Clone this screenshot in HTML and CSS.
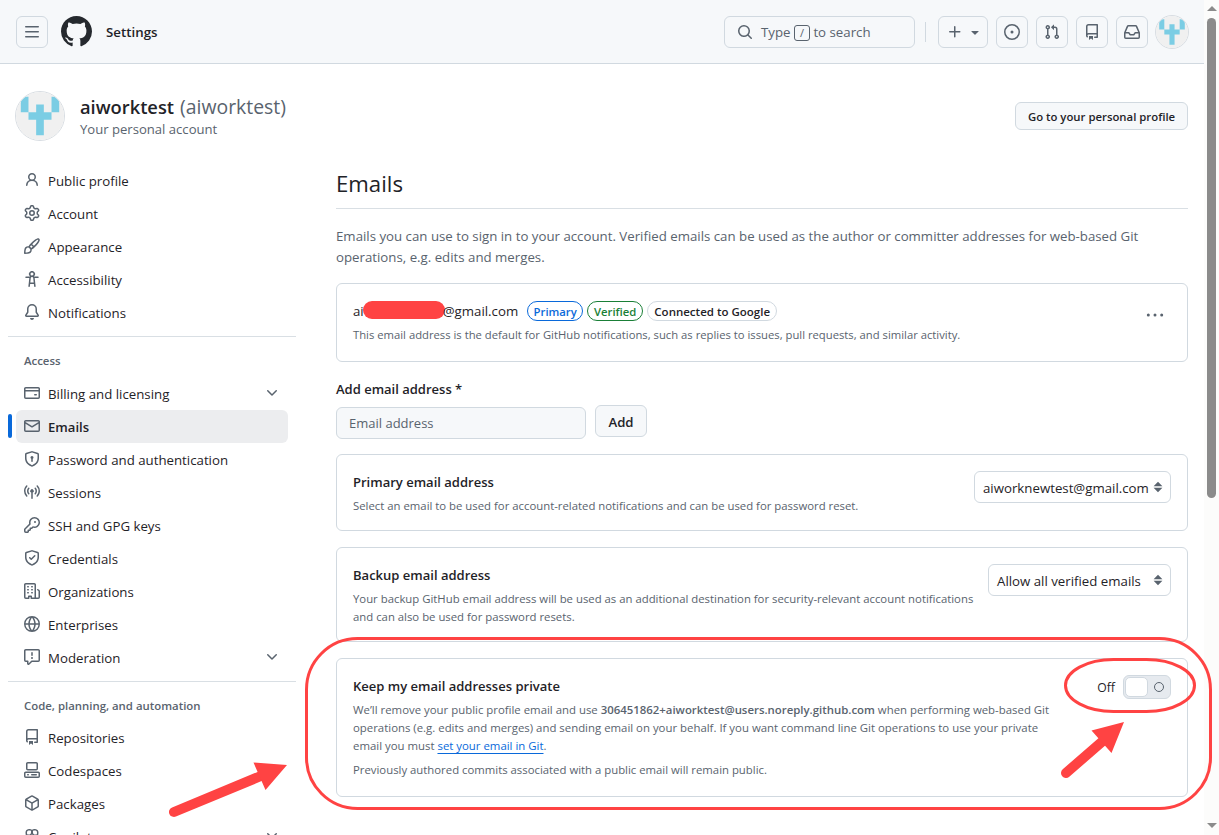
FILE: index.html
```
<!DOCTYPE html>
<html lang="en">
<head>
  <meta charset="UTF-8" />
  <meta name="viewport" content="width=device-width, initial-scale=1.0"/>
  <title>Emails - Settings</title>
  <link rel="stylesheet" href="styles.css">
</head>
<body>

  <!-- icons -->
  <svg class="sprite">
    <symbol id="i-bars" viewBox="0 0 16 16"><path d="M1 2.75A.75.75 0 0 1 1.75 2h12.5a.75.75 0 0 1 0 1.5H1.75A.75.75 0 0 1 1 2.75Zm0 5A.75.75 0 0 1 1.75 7h12.5a.75.75 0 0 1 0 1.5H1.75A.75.75 0 0 1 1 7.75ZM1.75 12h12.5a.75.75 0 0 1 0 1.5H1.75a.75.75 0 0 1 0-1.5Z"/></symbol>
    <symbol id="i-github" viewBox="0 0 16 16"><path d="M8 0c4.42 0 8 3.58 8 8a8.013 8.013 0 0 1-5.45 7.59c-.4.08-.55-.17-.55-.38 0-.27.01-1.13.01-2.2 0-.75-.25-1.23-.54-1.48 1.78-.2 3.65-.88 3.65-3.95 0-.88-.31-1.59-.82-2.15.08-.2.36-1.02-.08-2.12 0 0-.67-.22-2.2.82-.64-.18-1.32-.27-2-.27-.68 0-1.36.09-2 .27-1.53-1.03-2.2-.82-2.2-.82-.44 1.1-.16 1.92-.08 2.12-.51.56-.82 1.28-.82 2.15 0 3.06 1.86 3.75 3.64 3.95-.23.2-.44.55-.51 1.07-.46.21-1.61.55-2.33-.66-.15-.24-.6-.83-1.23-.82-.67.01-.27.38.01.53.34.19.73.9.82 1.13.16.45.68 1.31 2.69.94 0 .67.01 1.3.01 1.49 0 .21-.15.45-.55.38A7.995 7.995 0 0 1 0 8c0-4.42 3.58-8 8-8Z"/></symbol>
    <symbol id="i-search" viewBox="0 0 16 16"><path d="M10.68 11.74a6 6 0 0 1-7.922-8.982 6 6 0 0 1 8.982 7.922l3.04 3.04a.749.749 0 0 1-.326 1.275.749.749 0 0 1-.734-.215ZM11.5 7a4.499 4.499 0 1 0-8.997 0A4.499 4.499 0 0 0 11.5 7Z"/></symbol>
    <symbol id="i-plus" viewBox="0 0 16 16"><path d="M7.75 2a.75.75 0 0 1 .75.75V7h4.25a.75.75 0 0 1 0 1.5H8.5v4.25a.75.75 0 0 1-1.5 0V8.5H2.75a.75.75 0 0 1 0-1.5H7V2.75A.75.75 0 0 1 7.75 2Z"/></symbol>
    <symbol id="i-triangle" viewBox="0 0 16 16"><path d="m4.427 7.427 3.396 3.396a.25.25 0 0 0 .354 0l3.396-3.396A.25.25 0 0 0 11.396 7H4.604a.25.25 0 0 0-.177.427Z"/></symbol>
    <symbol id="i-issue" viewBox="0 0 16 16"><path d="M8 9.5a1.5 1.5 0 1 0 0-3 1.5 1.5 0 0 0 0 3Z"/><path d="M8 0a8 8 0 1 1 0 16A8 8 0 0 1 8 0ZM1.5 8a6.5 6.5 0 1 0 13 0 6.5 6.5 0 0 0-13 0Z"/></symbol>
    <symbol id="i-pull" viewBox="0 0 16 16"><path d="M1.5 3.25a2.25 2.25 0 1 1 3 2.122v5.256a2.251 2.251 0 1 1-1.5 0V5.372A2.25 2.25 0 0 1 1.5 3.25Zm5.677-.177L9.573.677A.25.25 0 0 1 10 .854V2.5h1A2.5 2.5 0 0 1 13.5 5v5.628a2.251 2.251 0 1 1-1.5 0V5a1 1 0 0 0-1-1h-1v1.646a.25.25 0 0 1-.427.177L7.177 3.427a.25.25 0 0 1 0-.354ZM3.75 2.5a.75.75 0 1 0 0 1.5.75.75 0 0 0 0-1.5Zm0 9.5a.75.75 0 1 0 0 1.5.75.75 0 0 0 0-1.5Zm8.25.75a.75.75 0 1 0 1.5 0 .75.75 0 0 0-1.5 0Z"/></symbol>
    <symbol id="i-repo" viewBox="0 0 16 16"><path d="M2 2.5A2.5 2.5 0 0 1 4.5 0h8.75a.75.75 0 0 1 .75.75v12.5a.75.75 0 0 1-.75.75h-2.5a.75.75 0 0 1 0-1.5h1.75v-2h-8a1 1 0 0 0-.714 1.7.75.75 0 1 1-1.072 1.05A2.495 2.495 0 0 1 2 11.5Zm10.5-1h-8a1 1 0 0 0-1 1v6.708A2.486 2.486 0 0 1 4.5 9h8ZM5 12.25a.25.25 0 0 1 .25-.25h3.5a.25.25 0 0 1 .25.25v3.25a.25.25 0 0 1-.4.2l-1.45-1.087a.249.249 0 0 0-.3 0L5.4 15.7a.25.25 0 0 1-.4-.2Z"/></symbol>
    <symbol id="i-inbox" viewBox="0 0 16 16"><path d="M2.8 2.06A1.75 1.75 0 0 1 4.41 1h7.18c.7 0 1.333.417 1.61 1.06l2.74 6.395c.04.093.06.194.06.295v4.5A1.75 1.75 0 0 1 14.25 15H1.75A1.75 1.75 0 0 1 0 13.25v-4.5c0-.101.02-.202.06-.295Zm1.61.44a.25.25 0 0 0-.23.152L1.887 8H4.75a.75.75 0 0 1 .6.3L6.625 10h2.75l1.275-1.7a.75.75 0 0 1 .6-.3h2.863L11.82 2.652a.25.25 0 0 0-.23-.152Zm10.09 7h-2.875l-1.275 1.7a.75.75 0 0 1-.6.3h-3.5a.75.75 0 0 1-.6-.3L4.375 9.5H1.5v3.75c0 .138.112.25.25.25h12.5a.25.25 0 0 0 .25-.25Z"/></symbol>
    <symbol id="i-person" viewBox="0 0 16 16"><path d="M10.561 8.073a6.005 6.005 0 0 1 3.432 5.142.75.75 0 1 1-1.498.07 4.5 4.5 0 0 0-8.99 0 .75.75 0 0 1-1.498-.07 6.004 6.004 0 0 1 3.431-5.142 3.999 3.999 0 1 1 5.123 0ZM10.5 5a2.5 2.5 0 1 0-5 0 2.5 2.5 0 0 0 5 0Z"/></symbol>
    <symbol id="i-gear" viewBox="0 0 16 16"><path d="M8 0a8.2 8.2 0 0 1 .701.031C9.444.095 9.99.645 10.16 1.29l.288 1.107c.018.066.079.158.212.224.231.114.454.243.668.386.123.082.233.09.299.071l1.103-.303c.644-.176 1.392.021 1.82.63.27.385.506.792.704 1.218.315.675.111 1.422-.364 1.891l-.814.806c-.049.048-.098.147-.088.294.016.257.016.515 0 .772-.01.147.038.246.088.294l.814.806c.475.469.679 1.216.364 1.891a7.977 7.977 0 0 1-.704 1.217c-.428.61-1.176.807-1.82.63l-1.102-.302c-.067-.019-.177-.011-.3.071a5.909 5.909 0 0 1-.668.386c-.133.066-.194.158-.211.224l-.29 1.106c-.168.646-.715 1.196-1.458 1.26a8.006 8.006 0 0 1-1.402 0c-.743-.064-1.289-.614-1.458-1.26l-.289-1.106c-.018-.066-.079-.158-.212-.224a5.738 5.738 0 0 1-.668-.386c-.123-.082-.233-.09-.299-.071l-1.103.303c-.644.176-1.392-.021-1.82-.63a8.12 8.12 0 0 1-.704-1.218c-.315-.675-.111-1.422.363-1.891l.815-.806c.05-.048.098-.147.088-.294a6.214 6.214 0 0 1 0-.772c.01-.147-.038-.246-.088-.294l-.815-.806C.635 6.045.431 5.298.746 4.623a7.92 7.92 0 0 1 .704-1.217c.428-.61 1.176-.807 1.82-.63l1.102.302c.067.019.177.011.3-.071.214-.143.437-.272.668-.386.133-.066.194-.158.211-.224l.29-1.106C6.009.645 6.556.095 7.299.03 7.53.01 7.764 0 8 0Zm-.571 1.525c-.036.003-.108.036-.137.146l-.289 1.105c-.147.561-.549.967-.998 1.189-.173.086-.34.183-.5.29-.417.278-.97.423-1.529.27l-1.103-.303c-.109-.03-.175.016-.195.045-.22.312-.412.644-.573.99-.014.031-.021.11.059.19l.815.806c.411.406.562.957.53 1.456a4.709 4.709 0 0 0 0 .582c.032.499-.119 1.05-.53 1.456l-.815.806c-.081.08-.073.159-.059.19.162.346.353.677.573.989.02.03.085.076.195.046l1.102-.303c.56-.153 1.113-.008 1.53.27.161.107.328.204.501.29.447.222.85.629.997 1.189l.289 1.105c.029.109.101.143.137.146a6.6 6.6 0 0 0 1.142 0c.036-.003.108-.036.137-.146l.289-1.105c.147-.561.549-.967.998-1.189.173-.086.34-.183.5-.29.417-.278.97-.423 1.529-.27l1.103.303c.109.029.175-.016.195-.045.22-.313.411-.644.573-.99.014-.031.021-.11-.059-.19l-.815-.806c-.411-.406-.562-.957-.53-1.456a4.709 4.709 0 0 0 0-.582c-.032-.499.119-1.05.53-1.456l.815-.806c.081-.08.073-.159.059-.19a6.464 6.464 0 0 0-.573-.989c-.02-.03-.085-.076-.195-.046l-1.102.303c-.56.153-1.113.008-1.53-.27a4.44 4.44 0 0 0-.501-.29c-.447-.222-.85-.629-.997-1.189l-.289-1.105c-.029-.11-.101-.143-.137-.146a6.6 6.6 0 0 0-1.142 0ZM11 8a3 3 0 1 1-6 0 3 3 0 0 1 6 0ZM9.5 8a1.5 1.5 0 1 0-3.001.001A1.5 1.5 0 0 0 9.5 8Z"/></symbol>
    <symbol id="i-brush" viewBox="0 0 16 16"><path d="M11.134 1.535c.7-.509 1.416-.942 2.076-1.155.649-.21 1.463-.267 2.069.34.603.601.568 1.411.368 2.07-.202.668-.624 1.39-1.125 2.096-1.011 1.424-2.496 2.987-3.775 4.249-1.098 1.084-2.132 1.839-3.04 2.3a3.744 3.744 0 0 1-1.055 3.217c-.431.431-1.065.691-1.657.861-.614.177-1.294.287-1.914.357A21.151 21.151 0 0 1 .797 16H.743l.007-.75H.749L.742 16a.75.75 0 0 1-.743-.742l.743-.008-.742.007v-.054a21.25 21.25 0 0 1 .13-2.284c.067-.647.187-1.287.358-1.914.17-.591.43-1.226.86-1.657a3.746 3.746 0 0 1 3.227-1.054c.466-.893 1.225-1.907 2.314-2.982 1.271-1.255 2.833-2.75 4.245-3.777ZM1.62 13.089c-.051.464-.086.929-.104 1.395.466-.018.932-.053 1.396-.104a10.511 10.511 0 0 0 1.668-.309c.526-.151.856-.325 1.011-.48a2.25 2.25 0 1 0-3.182-3.182c-.155.155-.329.485-.48 1.01a10.515 10.515 0 0 0-.309 1.67Zm10.396-10.34c-1.224.89-2.605 2.189-3.822 3.384l1.718 1.718c1.21-1.205 2.51-2.597 3.387-3.833.47-.662.78-1.227.912-1.662.134-.444.032-.551.009-.575h-.001V1.78c-.014-.014-.113-.113-.548.027-.432.14-.995.462-1.655.942Zm-4.832 7.266-.001.001a9.859 9.859 0 0 0 1.63-1.142L7.155 7.216a9.7 9.7 0 0 0-1.161 1.607c.482.302.889.71 1.19 1.192Z"/></symbol>
    <symbol id="i-a11y" viewBox="0 0 16 16"><path d="M9.923 5.302c.063.063.122.129.178.198H14A.75.75 0 0 1 14 7h-3.3l.578 5.163.362 2.997a.75.75 0 0 1-1.49.18L9.868 13H6.132l-.282 2.34a.75.75 0 0 1-1.49-.18l.362-2.997L5.3 7H2a.75.75 0 0 1 0-1.5h3.9a2.54 2.54 0 0 1 .176-.198 3 3 0 1 1 3.847 0ZM9.2 7.073h-.001a1.206 1.206 0 0 0-2.398 0L6.305 11.5h3.39ZM9.5 3a1.5 1.5 0 1 0-3.001.001A1.5 1.5 0 0 0 9.5 3Z"/></symbol>
    <symbol id="i-bell" viewBox="0 0 16 16"><path d="M8 16a2 2 0 0 0 1.985-1.75c.017-.137-.097-.25-.235-.25h-3.5c-.138 0-.252.113-.235.25A2 2 0 0 0 8 16ZM3 5a5 5 0 0 1 10 0v2.947c0 .05.015.098.042.139l1.703 2.555A1.519 1.519 0 0 1 13.482 13H2.518a1.516 1.516 0 0 1-1.263-2.36l1.703-2.554A.255.255 0 0 0 3 7.947Zm5-3.5A3.5 3.5 0 0 0 4.5 5v2.947c0 .346-.102.683-.294.97l-1.703 2.556a.017.017 0 0 0-.003.01l.001.006c0 .002.002.004.004.006l.006.004.007.001h10.964l.007-.001.006-.004.004-.006.001-.007a.017.017 0 0 0-.003-.01l-1.703-2.554a1.745 1.745 0 0 1-.294-.97V5A3.5 3.5 0 0 0 8 1.5Z"/></symbol>
    <symbol id="i-card" viewBox="0 0 16 16"><path d="M10.75 9a.75.75 0 0 0 0 1.5h1.5a.75.75 0 0 0 0-1.5h-1.5Z"/><path d="M0 3.75C0 2.784.784 2 1.75 2h12.5c.966 0 1.75.784 1.75 1.75v8.5A1.75 1.75 0 0 1 14.25 14H1.75A1.75 1.75 0 0 1 0 12.25ZM14.5 6.5h-13v5.75c0 .138.112.25.25.25h12.5a.25.25 0 0 0 .25-.25Zm0-2.75a.25.25 0 0 0-.25-.25H1.75a.25.25 0 0 0-.25.25V5h13Z"/></symbol>
    <symbol id="i-mail" viewBox="0 0 16 16"><path d="M1.75 2h12.5c.966 0 1.75.784 1.75 1.75v8.5A1.75 1.75 0 0 1 14.25 14H1.75A1.75 1.75 0 0 1 0 12.25v-8.5C0 2.784.784 2 1.75 2ZM1.5 12.251c0 .138.112.25.25.25h12.5a.25.25 0 0 0 .25-.25V5.809L8.38 9.397a.75.75 0 0 1-.76 0L1.5 5.809v6.442Zm13-8.181v-.32a.25.25 0 0 0-.25-.25H1.75a.25.25 0 0 0-.25.25v.32L8 7.88Z"/></symbol>
    <symbol id="i-shield-lock" viewBox="0 0 16 16"><path d="m8.533.133 5.25 1.68A1.75 1.75 0 0 1 15 3.48V7c0 1.566-.32 3.182-1.303 4.682-.983 1.498-2.585 2.813-5.032 3.855a1.697 1.697 0 0 1-1.33 0c-2.447-1.042-4.049-2.357-5.032-3.855C1.32 10.182 1 8.566 1 7V3.48a1.75 1.75 0 0 1 1.217-1.667l5.25-1.68a1.748 1.748 0 0 1 1.066 0Zm-.61 1.429.001.001-5.25 1.68a.251.251 0 0 0-.174.237V7c0 1.36.275 2.666 1.057 3.859.784 1.194 2.121 2.342 4.366 3.298a.196.196 0 0 0 .154 0c2.245-.957 3.582-2.103 4.366-3.297C13.225 9.666 13.5 8.358 13.5 7V3.48a.25.25 0 0 0-.174-.238l-5.25-1.68a.25.25 0 0 0-.153 0ZM9.5 6.5c0 .536-.286 1.032-.75 1.3v2.45a.75.75 0 0 1-1.5 0V7.8A1.5 1.5 0 1 1 9.5 6.5Z"/></symbol>
    <symbol id="i-broadcast" viewBox="0 0 16 16"><path d="M8.75 8.582v5.668a.75.75 0 0 1-1.5 0V8.582a1.75 1.75 0 1 1 1.5 0Zm3.983-7.125a.75.75 0 0 1 1.06.026A7.976 7.976 0 0 1 16 7c0 2.139-.84 4.083-2.207 5.517a.75.75 0 1 1-1.086-1.034A6.474 6.474 0 0 0 14.5 7a6.474 6.474 0 0 0-1.793-4.483.75.75 0 0 1 .026-1.06Zm-9.466 0c.3.286.312.76.026 1.06A6.474 6.474 0 0 0 1.5 7a6.47 6.47 0 0 0 1.793 4.483.75.75 0 0 1-1.086 1.034A7.973 7.973 0 0 1 0 7c0-2.139.84-4.083 2.207-5.517a.75.75 0 0 1 1.06-.026Zm8.556 2.321A4.988 4.988 0 0 1 13 7a4.988 4.988 0 0 1-1.177 3.222.75.75 0 1 1-1.146-.967A3.487 3.487 0 0 0 11.5 7c0-.86-.309-1.645-.823-2.255a.75.75 0 0 1 1.146-.967Zm-6.492.958A3.48 3.48 0 0 0 4.5 7a3.48 3.48 0 0 0 .823 2.255.75.75 0 0 1-1.146.967A4.981 4.981 0 0 1 3 7a4.982 4.982 0 0 1 1.188-3.236.75.75 0 1 1 1.143.972Z"/></symbol>
    <symbol id="i-key" viewBox="0 0 16 16"><path d="M10.5 0a5.499 5.499 0 1 1-1.288 10.848l-.932.932a.749.749 0 0 1-.53.22H7v.75a.749.749 0 0 1-.22.53l-.5.5a.749.749 0 0 1-.53.22H5v.75a.749.749 0 0 1-.22.53l-.5.5a.749.749 0 0 1-.53.22h-2A1.75 1.75 0 0 1 0 14.25v-2c0-.199.079-.389.22-.53l4.932-4.932A5.5 5.5 0 0 1 10.5 0Zm-4 5.5c-.001.431.069.86.205 1.269a.75.75 0 0 1-.181.768L1.5 12.56v1.69c0 .138.112.25.25.25h1.69l.06-.06v-1.19a.75.75 0 0 1 .75-.75h1.19l.06-.06v-1.19a.75.75 0 0 1 .75-.75h1.19l1.023-1.025a.75.75 0 0 1 .768-.18A4 4 0 1 0 6.5 5.5ZM11 6a1 1 0 1 1 0-2 1 1 0 0 1 0 2Z"/></symbol>
    <symbol id="i-shield-check" viewBox="0 0 16 16"><path d="m8.533.133 5.25 1.68A1.75 1.75 0 0 1 15 3.48V7c0 1.566-.32 3.182-1.303 4.682-.983 1.498-2.585 2.813-5.032 3.855a1.697 1.697 0 0 1-1.33 0c-2.447-1.042-4.049-2.357-5.032-3.855C1.32 10.182 1 8.566 1 7V3.48a1.75 1.75 0 0 1 1.217-1.667l5.25-1.68a1.748 1.748 0 0 1 1.066 0Zm-.61 1.429.001.001-5.25 1.68a.251.251 0 0 0-.174.237V7c0 1.36.275 2.666 1.057 3.859.784 1.194 2.121 2.342 4.366 3.298a.196.196 0 0 0 .154 0c2.245-.957 3.582-2.103 4.366-3.297C13.225 9.666 13.5 8.358 13.5 7V3.48a.25.25 0 0 0-.174-.238l-5.25-1.68a.25.25 0 0 0-.153 0ZM11.28 6.28l-3.5 3.5a.75.75 0 0 1-1.06 0l-1.5-1.5a.749.749 0 0 1 .326-1.275.749.749 0 0 1 .734.215l.97.97 2.97-2.97a.751.751 0 0 1 1.042.018.751.751 0 0 1 .018 1.042Z"/></symbol>
    <symbol id="i-org" viewBox="0 0 16 16"><path d="M1.75 16A1.75 1.75 0 0 1 0 14.25V1.75C0 .784.784 0 1.75 0h8.5C11.216 0 12 .784 12 1.75v12.5c0 .085-.006.168-.018.25h2.268a.25.25 0 0 0 .25-.25V8.285a.25.25 0 0 0-.111-.208l-1.055-.703a.749.749 0 1 1 .832-1.248l1.055.703c.487.325.779.871.779 1.456v5.965A1.75 1.75 0 0 1 14.25 16h-3.5a.766.766 0 0 1-.197-.026c-.099.017-.2.026-.303.026h-3a.75.75 0 0 1-.75-.75V14h-1v1.25a.75.75 0 0 1-.75.75Zm-.25-1.75c0 .138.112.25.25.25H4v-1.25a.75.75 0 0 1 .75-.75h2.5a.75.75 0 0 1 .75.75v1.25h2.25a.25.25 0 0 0 .25-.25V1.75a.25.25 0 0 0-.25-.25h-8.5a.25.25 0 0 0-.25.25ZM3.75 6h.5a.75.75 0 0 1 0 1.5h-.5a.75.75 0 0 1 0-1.5ZM3 3.75A.75.75 0 0 1 3.75 3h.5a.75.75 0 0 1 0 1.5h-.5A.75.75 0 0 1 3 3.75Zm4 3A.75.75 0 0 1 7.75 6h.5a.75.75 0 0 1 0 1.5h-.5A.75.75 0 0 1 7 6.75ZM7.75 3h.5a.75.75 0 0 1 0 1.5h-.5a.75.75 0 0 1 0-1.5ZM3 9.75A.75.75 0 0 1 3.75 9h.5a.75.75 0 0 1 0 1.5h-.5A.75.75 0 0 1 3 9.75ZM7.75 9h.5a.75.75 0 0 1 0 1.5h-.5a.75.75 0 0 1 0-1.5Z"/></symbol>
    <symbol id="i-globe" viewBox="0 0 16 16"><path d="M8 0a8 8 0 1 1 0 16A8 8 0 0 1 8 0ZM5.78 8.75a9.64 9.64 0 0 0 1.363 4.177c.255.426.542.832.857 1.215.245-.296.551-.705.857-1.215A9.64 9.64 0 0 0 10.22 8.75Zm4.44-1.5a9.64 9.64 0 0 0-1.363-4.177c-.307-.51-.612-.919-.857-1.215a9.927 9.927 0 0 0-.857 1.215A9.64 9.64 0 0 0 5.78 7.25Zm-5.944 1.5H1.543a6.507 6.507 0 0 0 4.666 5.5c-.123-.181-.24-.365-.352-.552-.715-1.192-1.437-2.874-1.581-4.948Zm-2.733-1.5h2.733c.144-2.074.866-3.756 1.58-4.948.12-.197.237-.381.353-.552a6.507 6.507 0 0 0-4.666 5.5Zm10.181 1.5c-.144 2.074-.866 3.756-1.58 4.948-.12.197-.237.381-.353.552a6.507 6.507 0 0 0 4.666-5.5Zm2.733-1.5a6.507 6.507 0 0 0-4.666-5.5c.123.181.24.365.353.552.714 1.192 1.436 2.874 1.58 4.948Z"/></symbol>
    <symbol id="i-report" viewBox="0 0 16 16"><path d="M0 1.75C0 .784.784 0 1.75 0h12.5C15.216 0 16 .784 16 1.75v9.5A1.75 1.75 0 0 1 14.25 13H8.06l-2.573 2.573A1.458 1.458 0 0 1 3 14.543V13H1.75A1.75 1.75 0 0 1 0 11.25Zm1.75-.25a.25.25 0 0 0-.25.25v9.5c0 .138.112.25.25.25h2a.75.75 0 0 1 .75.75v2.19l2.72-2.72a.749.749 0 0 1 .53-.22h6.5a.25.25 0 0 0 .25-.25v-9.5a.25.25 0 0 0-.25-.25Zm7 2.25v2.5a.75.75 0 0 1-1.5 0v-2.5a.75.75 0 0 1 1.5 0ZM9 9a1 1 0 1 1-2 0 1 1 0 0 1 2 0Z"/></symbol>
    <symbol id="i-codespaces" viewBox="0 0 16 16"><path d="M0 11.25c0-.966.784-1.75 1.75-1.75h12.5c.966 0 1.75.784 1.75 1.75v3A1.75 1.75 0 0 1 14.25 16H1.75A1.75 1.75 0 0 1 0 14.25Zm2-9.5C2 .784 2.784 0 3.75 0h8.5C13.216 0 14 .784 14 1.75v5a1.75 1.75 0 0 1-1.75 1.75h-8.5A1.75 1.75 0 0 1 2 6.75Zm1.75-.25a.25.25 0 0 0-.25.25v5c0 .138.112.25.25.25h8.5a.25.25 0 0 0 .25-.25v-5a.25.25 0 0 0-.25-.25Zm-2 9.5a.25.25 0 0 0-.25.25v3c0 .138.112.25.25.25h12.5a.25.25 0 0 0 .25-.25v-3a.25.25 0 0 0-.25-.25Z"/><path d="M7 12.75a.75.75 0 0 1 .75-.75h4.5a.75.75 0 0 1 0 1.5h-4.5a.75.75 0 0 1-.75-.75Zm-4 0a.75.75 0 0 1 .75-.75h.5a.75.75 0 0 1 0 1.5h-.5a.75.75 0 0 1-.75-.75Z"/></symbol>
    <symbol id="i-package" viewBox="0 0 16 16"><path d="m8.878.392 5.25 3.045c.54.314.872.89.872 1.514v6.098a1.75 1.75 0 0 1-.872 1.514l-5.25 3.045a1.75 1.75 0 0 1-1.756 0l-5.25-3.045A1.75 1.75 0 0 1 1 11.049V4.951c0-.624.332-1.201.872-1.514L7.122.392a1.75 1.75 0 0 1 1.756 0ZM7.875 1.69l-4.63 2.685L8 7.133l4.755-2.758-4.63-2.685a.248.248 0 0 0-.25 0ZM2.5 5.677v5.372c0 .09.047.171.125.216l4.625 2.683V8.432Zm6.25 8.271 4.625-2.683a.25.25 0 0 0 .125-.216V5.677L8.75 8.432Z"/></symbol>
    <symbol id="i-copilot" viewBox="0 0 16 16"><path d="M7.998 15.035c-4.562 0-7.873-2.914-7.998-3.749V9.338c.085-.628.677-1.686 1.588-2.065.013-.07.024-.143.036-.218.029-.183.06-.384.126-.612-.201-.508-.254-1.084-.254-1.656 0-.87.128-1.769.693-2.484.579-.733 1.494-1.124 2.724-1.261 1.206-.134 2.262.034 2.944.765.05.053.096.108.139.165.044-.057.094-.112.143-.165.682-.731 1.738-.899 2.944-.765 1.23.137 2.145.528 2.724 1.261.566.715.693 1.614.693 2.484 0 .572-.053 1.148-.254 1.656.066.228.098.429.126.612.012.076.024.148.037.218.924.385 1.522 1.471 1.591 2.095v1.872c0 .766-3.351 3.795-8.002 3.795Zm0-1.485c2.28 0 4.584-1.11 5.002-1.433V7.862l-.023-.116c-.49.21-1.075.291-1.727.291-1.146 0-2.059-.327-2.71-.991A3.222 3.222 0 0 1 8 6.303a3.24 3.24 0 0 1-.544.743c-.65.664-1.563.991-2.71.991-.652 0-1.236-.081-1.727-.291l-.023.116v4.255c.419.323 2.722 1.433 5.002 1.433ZM6.762 2.83c-.193-.206-.637-.413-1.682-.297-1.019.113-1.479.404-1.713.7-.247.312-.369.789-.369 1.554 0 .793.129 1.171.308 1.371.162.181.519.379 1.442.379.853 0 1.339-.235 1.638-.54.315-.322.527-.827.617-1.553.117-.935-.037-1.395-.241-1.614Zm4.155-.297c-1.044-.116-1.488.091-1.681.297-.204.219-.359.679-.242 1.614.091.726.303 1.231.618 1.553.299.305.784.54 1.638.54.922 0 1.28-.198 1.442-.379.179-.2.308-.578.308-1.371 0-.765-.123-1.242-.37-1.554-.233-.296-.693-.587-1.713-.7Z"/></symbol>
    <symbol id="i-chevron" viewBox="0 0 16 16"><path d="M12.78 5.22a.749.749 0 0 1 0 1.06l-4.25 4.25a.749.749 0 0 1-1.06 0L3.22 6.28a.749.749 0 1 1 1.06-1.06L8 8.939l3.72-3.719a.749.749 0 0 1 1.06 0Z"/></symbol>
    <symbol id="i-kebab" viewBox="0 0 20 16"><circle cx="3.3" cy="8" r="1.5"/><circle cx="10" cy="8" r="1.5"/><circle cx="16.7" cy="8" r="1.5"/></symbol>
    <symbol id="i-updown" viewBox="0 0 10 12"><path d="M5 .8 9.400 5.200H.6ZM5 11.2 9.400 6.800H.6Z"/></symbol>
    <symbol id="i-avatar" viewBox="0 0 50 50"><rect width="50" height="50" fill="#f0f0f0"/><path fill="#7bcde4" d="M5 5h8v16H5zM37 5h8v16h-8zM21 13h8v32h-8zM13 21h24v8H13z"/></symbol>
  </svg>

  <div class="page">
    <header class="topbar">
      <button class="icon-btn"><svg class="icon"><use href="#i-bars"/></svg></button>
      <svg class="logo"><use href="#i-github"/></svg>
      <span class="context">Settings</span>
      <div class="search">
        <svg class="icon"><use href="#i-search"/></svg>
        <span>Type <kbd>/</kbd> to search</span>
      </div>
      <span class="divider"></span>
      <button class="icon-btn create"><svg class="icon"><use href="#i-plus"/></svg><svg class="icon"><use href="#i-triangle"/></svg></button>
      <button class="icon-btn"><svg class="icon"><use href="#i-issue"/></svg></button>
      <button class="icon-btn"><svg class="icon"><use href="#i-pull"/></svg></button>
      <button class="icon-btn"><svg class="icon"><use href="#i-repo"/></svg></button>
      <button class="icon-btn"><svg class="icon"><use href="#i-inbox"/></svg></button>
      <svg class="avatar small"><use href="#i-avatar"/></svg>
    </header>

    <div class="profile">
      <svg class="avatar"><use href="#i-avatar"/></svg>
      <div class="who">
        <div class="name"><b>aiworktest</b> <span>(aiworktest)</span></div>
        <div class="sub">Your personal account</div>
      </div>
      <button class="btn btn-sm">Go to your personal profile</button>
    </div>

    <div class="layout">
      <nav class="sidebar">
        <ul>
          <li><svg class="icon"><use href="#i-person"/></svg>Public profile</li>
          <li><svg class="icon"><use href="#i-gear"/></svg>Account</li>
          <li><svg class="icon"><use href="#i-brush"/></svg>Appearance</li>
          <li><svg class="icon"><use href="#i-a11y"/></svg>Accessibility</li>
          <li><svg class="icon"><use href="#i-bell"/></svg>Notifications</li>
        </ul>
        <h3>Access</h3>
        <ul>
          <li><svg class="icon"><use href="#i-card"/></svg>Billing and licensing<svg class="icon chevron"><use href="#i-chevron"/></svg></li>
          <li class="active"><svg class="icon"><use href="#i-mail"/></svg>Emails</li>
          <li><svg class="icon"><use href="#i-shield-lock"/></svg>Password and authentication</li>
          <li><svg class="icon"><use href="#i-broadcast"/></svg>Sessions</li>
          <li><svg class="icon"><use href="#i-key"/></svg>SSH and GPG keys</li>
          <li><svg class="icon"><use href="#i-shield-check"/></svg>Credentials</li>
          <li><svg class="icon"><use href="#i-org"/></svg>Organizations</li>
          <li><svg class="icon"><use href="#i-globe"/></svg>Enterprises</li>
          <li><svg class="icon"><use href="#i-report"/></svg>Moderation<svg class="icon chevron"><use href="#i-chevron"/></svg></li>
        </ul>
        <h3>Code, planning, and automation</h3>
        <ul>
          <li><svg class="icon"><use href="#i-repo"/></svg>Repositories</li>
          <li><svg class="icon"><use href="#i-codespaces"/></svg>Codespaces</li>
          <li><svg class="icon"><use href="#i-package"/></svg>Packages</li>
          <li><svg class="icon"><use href="#i-copilot"/></svg>Copilot<svg class="icon chevron"><use href="#i-chevron"/></svg></li>
        </ul>
      </nav>

      <main class="content">
        <h1>Emails</h1>
        <p class="intro">Emails you can use to sign in to your account. Verified emails can be used as the author or committer addresses for web-based Git operations, e.g. edits and merges.</p>

        <section class="box email">
          <div class="box-text">
            <div class="email-row">
              <span class="address">ai<i class="redacted"></i>@gmail.com</span>
              <span class="label primary">Primary</span>
              <span class="label verified">Verified</span>
              <span class="label google">Connected to Google</span>
            </div>
            <p>This email address is the default for GitHub notifications, such as replies to issues, pull requests, and similar activity.</p>
          </div>
          <svg class="kebab"><use href="#i-kebab"/></svg>
        </section>

        <label class="field-label" for="email">Add email address *</label>
        <div class="add-row">
          <input id="email" type="text" placeholder="Email address">
          <button class="btn btn-add">Add</button>
        </div>

        <section class="box">
          <div class="box-text">
            <h2>Primary email address</h2>
            <p>Select an email to be used for account-related notifications and can be used for password reset.</p>
          </div>
          <div class="select select-primary">aiworknewtest@gmail.com<svg><use href="#i-updown"/></svg></div>
        </section>

        <section class="box">
          <div class="box-text">
            <h2>Backup email address</h2>
            <p>Your backup GitHub email address will be used as an additional destination for security-relevant account notifications<br>and can also be used for password resets.</p>
          </div>
          <div class="select select-backup">Allow all verified emails<svg><use href="#i-updown"/></svg></div>
        </section>

        <section class="box">
          <div class="box-text">
            <h2>Keep my email addresses private</h2>
            <p class="privacy">We’ll remove your public profile email and use <b>306451862+aiworktest@users.noreply.github.com</b> when performing web-based Git<br>operations (e.g. edits and merges) and sending email on your behalf. If you want command line Git operations to use your private<br>email you must <a href="#">set your email in Git</a>.</p>
            <p class="note">Previously authored commits associated with a public email will remain public.</p>
          </div>
          <div class="toggle-wrap">Off
            <div class="toggle"><span class="knob"></span><span class="ring"></span></div>
          </div>
        </section>
      </main>
    </div>
  </div>

  <div class="scrollbar">
    <span class="arrow up"></span>
    <span class="thumb"></span>
    <span class="arrow down"></span>
  </div>

  <!-- callouts -->
  <svg class="callouts" viewBox="0 0 1219 835">
    <rect x="306.5" y="638.5" width="904" height="170" rx="51"/>
    <rect x="1065.5" y="659.5" width="129" height="52" rx="48" ry="26"/>
    <path class="shaft" d="M174 812 262 775.500M1066 773 1104 740"/>
    <path class="head" d="M287 765 253.500 762.500 265.500 790ZM1124 722 1091.500 730.500 1111.500 753Z"/>
  </svg>

</body>
</html>
```
FILE: styles.css
```
* {
  box-sizing: border-box;
}

body {
  margin: 0;
  width: 1219px;
  height: 835px;
  overflow: hidden;
  position: relative;
  display: flex;
  background: #fff;
  color: #1f2328;
  font-family: "Open Sans", "Noto Sans", sans-serif;
  font-size: 13.25px;
  line-height: 21px;
}

h1, h2, h3, p, ul {
  margin: 0;
  padding: 0;
}

button, input {
  font-family: inherit;
  color: inherit;
}

.sprite {
  display: none;
}

.icon {
  width: 16px;
  height: 16px;
  fill: #59636e;
  flex: none;
}

.page {
  width: 1204px;
  height: 835px;
  overflow: hidden;
}

/* top bar */
.topbar {
  height: 64px;
  padding: 0 15px 0 16px;
  display: flex;
  align-items: center;
  background: #f6f8fa;
  border-bottom: 1px solid #d1d9e0;
}

.icon-btn {
  width: 32px;
  height: 32px;
  padding: 0;
  display: flex;
  align-items: center;
  justify-content: center;
  background: #f6f8fa;
  border: 1px solid #d1d9e0;
  border-radius: 6px;
}

.topbar .icon-btn + .icon-btn {
  margin-left: 8px;
}

.icon-btn.create {
  width: 50px;
  gap: 4px;
  padding-left: 4px;
}

.logo {
  width: 31px;
  height: 31px;
  margin: 0 14px 0 13px;
  fill: #25292e;
}

.context {
  padding-top: 2px;
  font-size: 13.3px;
  font-weight: 600;
}

.search {
  width: 191px;
  height: 32px;
  margin-left: auto;
  padding: 2px 12px 0;
  display: flex;
  align-items: center;
  gap: 8px;
  color: #59636e;
  border: 1px solid #d1d9e0;
  border-radius: 6px;
}

.search .icon {
  margin-top: -2px;
}

.search kbd {
  display: inline-block;
  width: 16px;
  height: 16px;
  border: 1px solid #59636e;
  border-radius: 3px;
  font-family: inherit;
  font-size: 11px;
  line-height: 14px;
  text-align: center;
}

.divider {
  width: 1px;
  height: 20px;
  margin: 0 12px 0 10px;
  background: #d1d9e0;
}

.avatar {
  width: 50px;
  height: 50px;
  border-radius: 50%;
  border: 1px solid #d8dde2;
}

.avatar.small {
  width: 34px;
  height: 34px;
  margin-left: 7px;
}

/* profile header */
.profile {
  display: flex;
  align-items: flex-start;
  padding: 27px 16px 0 15px;
}

.who {
  margin-left: 15px;
  padding-top: 3px;
}

.name {
  font-size: 19.4px;
  line-height: 25px;
  color: #59636e;
}

.name b {
  margin-right: 1px;
  font-size: 18.3px;
  font-weight: 600;
  color: #1f2328;
}

.sub {
  font-size: 13.1px;
  line-height: 20px;
  color: #59636e;
}

.btn {
  height: 32px;
  padding: 0 12px;
  background: #f6f8fa;
  border: 1px solid #d1d9e0;
  border-radius: 6px;
  font-size: 13.2px;
  font-weight: 600;
}

.btn-sm {
  height: 28px;
  width: 173px;
  padding: 0;
  margin: 11px 0 0 auto;
  font-size: 11.35px;
}

.layout {
  display: flex;
}

/* sidebar */
.sidebar {
  width: 288px;
  margin: 23px 40px 0 8px;
}

.sidebar ul {
  list-style: none;
  padding: 0 8px;
}

.sidebar li {
  position: relative;
  height: 33px;
  display: flex;
  align-items: center;
  gap: 8px;
  padding: 2px 8px 0;
  border-radius: 6px;
}

.sidebar li .icon {
  margin-top: -3px;
}

.sidebar li.active {
  background: #ecedef;
  font-size: 13.1px;
  font-weight: 600;
}

.sidebar li.active::before {
  content: "";
  position: absolute;
  left: -8px;
  top: 4px;
  width: 4px;
  height: 24px;
  border-radius: 3px;
  background: #0969da;
}

.sidebar .chevron {
  margin-left: auto;
}

.sidebar h3 {
  margin-top: 7px;
  padding: 15px 16px 6px;
  height: 40.6px;
  border-top: 1px solid #d9dfe4;
  color: #59636e;
  font-size: 11.4px;
  font-weight: 600;
  line-height: 18px;
}

/* main column */
.content {
  width: 852px;
  padding-top: 25px;
}

h1 {
  height: 43px;
  font-size: 22.2px;
  font-weight: 400;
  line-height: 36px;
  border-bottom: 1px solid #d9dfe4;
}

.intro {
  margin: 17px 0 15px;
  color: #59636e;
}

.box {
  display: flex;
  justify-content: space-between;
  align-items: flex-start;
  margin-bottom: 16px;
  padding: 16px 16px 15px;
  border: 1px solid #d1d9e0;
  border-radius: 6px;
}

.box h2 {
  padding-top: 1px;
  font-size: 13.03px;
  font-weight: 600;
  line-height: 21px;
}

.box p {
  margin-top: 4px;
  color: #59636e;
  font-size: 11.35px;
  line-height: 18px;
  white-space: nowrap;
}

.box p b {
  font-weight: 600;
}

.box p.privacy {
  font-size: 11.4px;
}

.box p.note {
  margin: 6px 0 2px;
}

.box a {
  color: #0969da;
  text-underline-offset: 3px;
}

.box.email {
  height: 79px;
}

.email-row {
  display: flex;
  align-items: flex-start;
  gap: 4px;
  height: 22px;
}

.address {
  margin-right: 5px;
  padding-top: 1px;
}

.redacted {
  display: inline-block;
  width: 82px;
  height: 18px;
  margin: 0 -2px 0 -1px;
  border-radius: 9px;
  background: #ff4343;
  vertical-align: -3px;
}

.label {
  height: 20px;
  margin-top: 1px;
  border: 1px solid #d1d9e0;
  border-radius: 10px;
  font-size: 11.3px;
  font-weight: 600;
  line-height: 19px;
  text-align: center;
}

.label.primary {
  width: 56px;
  color: #0969da;
  border-color: #0969da;
}

.label.verified {
  width: 56px;
  color: #1a7f37;
  border-color: #1a7f37;
}

.label.google {
  width: 130px;
  font-size: 11.5px;
}

.box.email p {
  font-size: 11.28px;
}

.kebab {
  width: 20px;
  height: 16px;
  margin: 7px 6px 0 0;
  fill: #59636e;
}

.field-label {
  display: block;
  margin-top: 17px;
  font-size: 13px;
  font-weight: 600;
}

.add-row {
  display: flex;
  align-items: flex-start;
  gap: 9px;
  margin: 5px 0 15px;
}

.add-row input {
  width: 250px;
  height: 32px;
  margin-top: 2px;
  padding: 0 12px;
  background: #f6f8fa;
  border: 1px solid #d1d9e0;
  border-radius: 6px;
  font-size: 13px;
}

.add-row input::placeholder {
  color: #59636e;
}

.btn-add {
  width: 52px;
  padding: 2px 0 0;
}

.select {
  display: flex;
  justify-content: space-between;
  align-items: center;
  height: 32px;
  padding: 2px 7px 0 8px;
  border: 1px solid #d1d9e0;
  border-radius: 6px;
  white-space: nowrap;
}

.select svg {
  width: 10px;
  height: 12px;
  margin-top: -2px;
  fill: #59636e;
}

.select-primary {
  width: 197px;
}

.select-backup {
  width: 183px;
}

.toggle-wrap {
  display: flex;
  align-items: center;
  gap: 8px;
  font-size: 12.2px;
}

.toggle {
  width: 48px;
  height: 24px;
  display: flex;
  align-items: center;
  padding: 1px;
  background: #e6eaef;
  border: 1px solid #d1d9e0;
  border-radius: 6px;
}

.knob {
  width: 23px;
  height: 20px;
  background: #fff;
  border: 1px solid #d1d9e0;
  border-radius: 5px;
}

.ring {
  width: 10px;
  height: 10px;
  margin-left: 6px;
  border: 1.5px solid #59636e;
  border-radius: 50%;
}

/* scrollbar */
.scrollbar {
  width: 15px;
  height: 835px;
  padding: 6px 3px 7px;
  display: flex;
  flex-direction: column;
  background: #fcfcfb;
}

.thumb {
  width: 9px;
  height: 480px;
  margin-top: 7px;
  border-radius: 5px;
  background: #8b8b8b;
}

.arrow {
  border: 5px solid transparent;
  border-top-width: 0;
  border-bottom: 5px solid #8b8b8b;
  width: 0;
  height: 0;
}

.arrow.down {
  margin-top: auto;
  border-bottom-width: 0;
  border-top: 5px solid #8b8b8b;
}

/* callouts drawn over the page */
.callouts {
  position: absolute;
  left: 0;
  top: 0;
  width: 1219px;
  height: 835px;
  fill: none;
  stroke: #ff4343;
  stroke-width: 3;
}

.callouts .shaft {
  stroke-width: 10;
  stroke-linecap: round;
}

.callouts .head {
  fill: #ff4343;
  stroke: none;
}
```
